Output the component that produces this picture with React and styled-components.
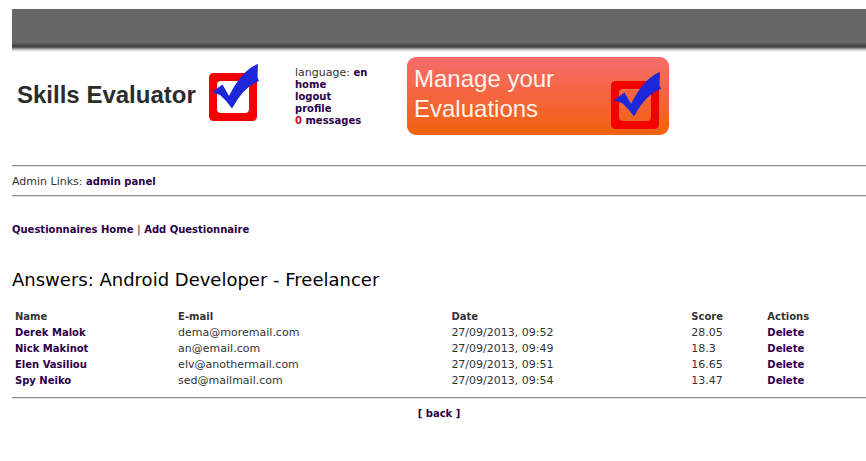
import styled, { createGlobalStyle } from "styled-components";
import React from "react";

const GlobalStyle = createGlobalStyle`
  body {
    margin: 0;
    background: #fff;
    color: #333;
    font-family: Verdana, "DejaVu Sans", sans-serif;
    font-size: 11px;
    line-height: 12px;
  }
`;

const Page = styled.div`
  padding: 9px 0 40px 12px;
`;

const TopBar = styled.div`
  height: 43px;
  background: linear-gradient(
    #666 34px,
    #484848 36px,
    #444 38px,
    #aaa 40px,
    #eee 42px,
    #fff 43px
  );
`;

const Header = styled.header`
  display: flex;
  align-items: flex-start;
  height: 113px;
`;

const Logo = styled.div`
  display: flex;
  align-items: center;
  justify-content: space-between;
  flex: none;
  box-sizing: border-box;
  width: 283px;
  padding: 12px 35px 0 5px;
`;

const LogoText = styled.span`
  padding-top: 4px;
  color: #2c2c2c;
  font: bold 24px/28px "Liberation Sans", Arial, sans-serif;
  white-space: nowrap;
`;

const UserMenu = styled.nav`
  flex: none;
  box-sizing: border-box;
  width: 112px;
  padding-top: 15px;
`;

const Link = styled.a`
  color: #2b0048;
  font-size: 10px;
  font-weight: bold;
  text-decoration: none;
`;

const MessageCount = styled.span`
  color: #c8102e;
`;

const Banner = styled.a`
  display: flex;
  align-items: flex-start;
  justify-content: space-between;
  flex: none;
  box-sizing: border-box;
  width: 262px;
  height: 78px;
  margin-top: 5px;
  padding: 7px 7px 0;
  border-radius: 9px;
  background: linear-gradient(#f76c6c, #f5653f 50%, #f0620c);
  color: #fff3ec;
  font: 24px/30px "Liberation Sans", Arial, sans-serif;
  text-decoration: none;
`;

const CheckIcon = styled.svg`
  flex: none;
  display: block;
  width: 52px;
  height: 58px;
  margin-top: ${(props) => props.$top || 0}px;
`;

const Rule = styled.hr`
  height: 0;
  margin: 0;
  border: 0;
  border-top: 1px solid #8c8c8c;
  border-bottom: 1px solid #e0e0e0;
`;

const AdminLinks = styled.div`
  padding: 9px 0 7px;
`;

const SubNav = styled.nav`
  padding-top: 27px;
`;

const Title = styled.h1`
  margin: 32px 0 17px;
  color: #000;
  font-size: 18px;
  font-weight: normal;
  line-height: 24px;
`;

const Table = styled.table`
  width: 100%;
  margin-bottom: 8px;
  border-collapse: collapse;
  table-layout: fixed;
`;

const Column = styled.col`
  width: ${(props) => props.$width};
`;

const HeadCell = styled.th`
  height: 16px;
  padding: 0 3px;
  font-size: 10px;
  text-align: left;
`;

const Cell = styled.td`
  height: 16px;
  padding: 0 3px;
`;

const Back = styled.div`
  padding-top: 9px;
  text-align: center;
`;

const columns = [
  { name: "Name", width: "19.1%" },
  { name: "E-mail", width: "32%" },
  { name: "Date", width: "28.1%" },
  { name: "Score", width: "8.9%" },
  { name: "Actions", width: "11.9%" },
];

const answers = [
  { id: 1, name: "Derek Malok", email: "dema@moremail.com", date: "27/09/2013, 09:52", score: "28.05" },
  { id: 2, name: "Nick Makinot", email: "an@email.com", date: "27/09/2013, 09:49", score: "18.3" },
  { id: 3, name: "Elen Vasiliou", email: "elv@anothermail.com", date: "27/09/2013, 09:51", score: "16.65" },
  { id: 4, name: "Spy Neiko", email: "sed@mailmail.com", date: "27/09/2013, 09:54", score: "13.47" },
];

function Check({ top }) {
  return (
    <CheckIcon viewBox="0 0 52 58" $top={top} aria-hidden="true">
      <path
        fill="#f50000"
        fillRule="evenodd"
        d="M6 9H44Q49 9 49 14V52Q49 57 44 57H6Q1 57 1 52V14Q1 9 6 9ZM13 17Q9 17 9 21V45Q9 49 13 49H37Q41 49 41 45V21Q41 17 37 17Z"
      />
      <path
        fill="#1c28d8"
        d="M4 28L14.500 20.500L21 32Q34 6 50 0L49.500 13L51 17Q36 22 24 44.500Q18 36 12 31Q8 29.500 4 28Z"
      />
    </CheckIcon>
  );
}

function App() {
  return (
    <Page>
      <GlobalStyle />
      <TopBar />
      <Header>
        <Logo>
          <LogoText>Skills Evaluator</LogoText>
          <Check />
        </Logo>
        <UserMenu>
          <div>
            language: <Link href="#en">en</Link>
          </div>
          <div>
            <Link href="#home">home</Link>
          </div>
          <div>
            <Link href="#logout">logout</Link>
          </div>
          <div>
            <Link href="#profile">profile</Link>
          </div>
          <div>
            <Link href="#messages">
              <MessageCount>0</MessageCount> messages
            </Link>
          </div>
        </UserMenu>
        <Banner href="#manage">
          <span>
            Manage your
            <br />
            Evaluations
          </span>
          <Check top={8} />
        </Banner>
      </Header>
      <Rule />
      <AdminLinks>
        Admin Links: <Link href="#admin">admin panel</Link>
      </AdminLinks>
      <Rule />
      <SubNav>
        <Link href="#questionnaires">Questionnaires Home</Link> |{" "}
        <Link href="#add">Add Questionnaire</Link>
      </SubNav>
      <Title>Answers: Android Developer - Freelancer</Title>
      <Table>
        <colgroup>
          {columns.map((column) => (
            <Column key={column.name} $width={column.width} />
          ))}
        </colgroup>
        <thead>
          <tr>
            {columns.map((column) => (
              <HeadCell key={column.name}>{column.name}</HeadCell>
            ))}
          </tr>
        </thead>
        <tbody>
          {answers.map((answer) => (
            <tr key={answer.id}>
              <Cell>
                <Link href={`#answer-${answer.id}`}>{answer.name}</Link>
              </Cell>
              <Cell>{answer.email}</Cell>
              <Cell>{answer.date}</Cell>
              <Cell>{answer.score}</Cell>
              <Cell>
                <Link href={`#delete-${answer.id}`}>Delete</Link>
              </Cell>
            </tr>
          ))}
        </tbody>
      </Table>
      <Rule />
      <Back>
        <Link href="#back">[ back ]</Link>
      </Back>
    </Page>
  );
}

export default App;
